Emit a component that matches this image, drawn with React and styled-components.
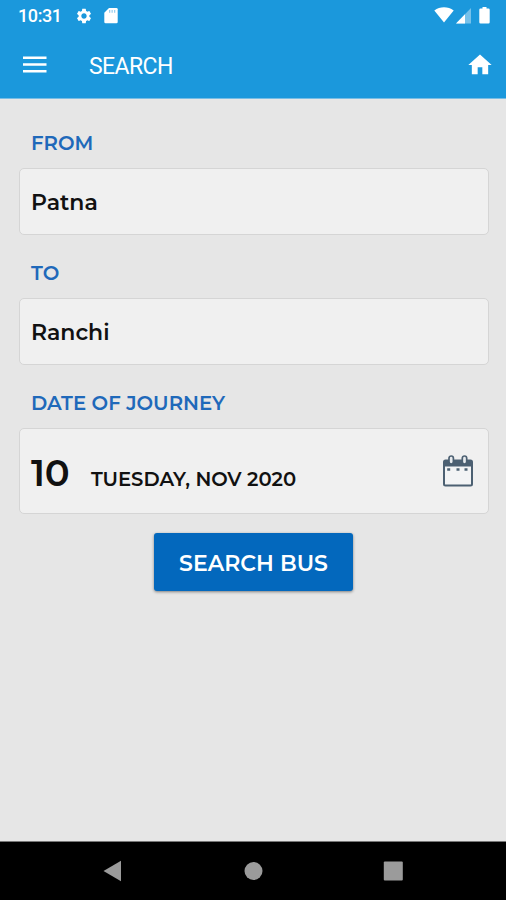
import React from "react";
import styled, { createGlobalStyle } from "styled-components";
import { MdSettings } from "react-icons/md";

const GlobalStyle = createGlobalStyle`
  * { box-sizing: border-box; }
  body { margin: 0; background: #e6e6e6; }
`;

const Screen = styled.div`
  display: flex;
  flex-direction: column;
  width: 506px;
  height: 900px;
  background: #e6e6e6;
  font-family: "Montserrat", "Inter", sans-serif;
  overflow: hidden;
`;

const Header = styled.header`
  height: 99px;
  flex: none;
  background: #1b98dc;
  border-bottom: 1px solid #78bde5;
  color: #fff;
  font-family: "Roboto", sans-serif;
`;

const StatusBar = styled.div`
  display: flex;
  align-items: center;
  height: 32px;
  padding: 0 16px 0 18px;
`;

const Clock = styled.span`
  width: 57px;
  font-size: 18px;
  font-weight: 500;
  line-height: 32px;
  letter-spacing: -0.4px;
`;

const StatusIcons = styled.div`
  display: flex;
  align-items: center;
  gap: ${(p) => p.$gap}px;
  margin-left: ${(p) => (p.$end ? "auto" : "0")};
`;

const BatterySlot = styled.span`
  display: flex;
  margin-left: 6px;
`;

const Toolbar = styled.div`
  display: flex;
  align-items: center;
  height: 66px;
  padding: 0 12px 0 23px;
`;

const IconButton = styled.button`
  display: flex;
  padding: 0;
  border: 0;
  background: none;
  color: inherit;
`;

const Title = styled.h1`
  flex: 1;
  margin: 3px 0 0 42px;
  font-size: 23px;
  font-weight: 400;
  line-height: 66px;
  letter-spacing: -0.6px;
`;

const Form = styled.main`
  flex: 1;
  display: flex;
  flex-direction: column;
  padding: 30px 17px 0 19px;
`;

const Label = styled.label`
  height: 39px;
  padding-left: 12px;
  color: #1f69ba;
  font-size: 19.7px;
  font-weight: 600;
  line-height: 29px;
`;

const Field = styled.div`
  display: flex;
  align-items: center;
  height: ${(p) => (p.$tall ? 86 : 67)}px;
  margin-bottom: ${(p) => (p.$tall ? 19 : 24)}px;
  padding: ${(p) => (p.$tall ? "0 15px 2px 11px" : "2px 15px 0 11px")};
  border: 1px solid #d5d5d5;
  border-radius: 5px;
  background: #f0f0f0;
  color: #111;
`;

const Value = styled.span`
  font-size: 22px;
  font-weight: 600;
`;

const DateText = styled.div`
  flex: 1;
  display: flex;
  align-items: baseline;
  padding-top: 4px;
`;

const Day = styled.span`
  width: 60px;
  font-size: 37px;
  font-weight: 600;
  letter-spacing: -0.3px;
`;

const Month = styled.span`
  font-size: 19.6px;
  font-weight: 600;
  white-space: nowrap;
`;

const SearchButton = styled.button`
  align-self: center;
  width: 199px;
  height: 58px;
  margin-right: 2px;
  padding: 3px 0 0 1px;
  border: 0;
  border-radius: 3px;
  background: #0368bd;
  box-shadow: 0 1px 3px rgba(0, 0, 0, 0.45);
  color: #fff;
  font-family: inherit;
  font-size: 22px;
  font-weight: 600;
  white-space: nowrap;
`;

const NavBar = styled.nav`
  flex: none;
  display: flex;
  justify-content: space-between;
  align-items: center;
  height: 59px;
  padding: 0 103px 0 102px;
  border-top: 1px solid #777;
  background: #000;
`;

const SdCard = () => (
  <svg width="14" height="17" viewBox="0 0 14 17">
    <path fill="#fff" d="M5 0h7.400a1.300 1.300 0 0 1 1.300 1.300v12.700a1.300 1.300 0 0 1-1.300 1.300H1.600A1.300 1.300 0 0 1 .3 14V4.700z" />
    <path fill="#9bd0f0" d="M5 2h1.300v2.700H5zM7.500 2h1.300v2.700H7.500zM10 2h1.300v2.700H10z" />
  </svg>
);

const Wifi = () => (
  <svg width="20" height="18" viewBox="0 0 20 18">
    <path fill="#fff" d="M.3 3.500C6-.8 14-.8 19.700 3.500L10 15.500z" />
  </svg>
);

const Signal = () => (
  <svg width="15" height="16" viewBox="0 0 15 16">
    <path fill="#76c1ea" d="M15 0v15.500H0z" />
    <path fill="#fff" d="M9 6.200v9.300H0z" />
  </svg>
);

const Battery = () => (
  <svg width="11" height="18" viewBox="0 0 11 18">
    <path fill="#fff" d="M3.500 0h4v1.500h2A1.200 1.200 0 0 1 10.700 2.700v12.500a1.200 1.200 0 0 1-1.200 1.200h-8A1.200 1.200 0 0 1 .3 15.200V2.700A1.200 1.200 0 0 1 1.500 1.500h2z" />
  </svg>
);

const Menu = () => (
  <svg width="24" height="18" viewBox="0 0 24 18">
    <path fill="#fff" d="M0 .5h23.500v2.600H0zM0 7.200h23.500v2.600H0zM0 13.900h23.500v2.600H0z" />
  </svg>
);

const Home = () => (
  <svg width="28" height="28" viewBox="0 0 24 24">
    <path fill="#fff" d="M10 20v-6h4v6h5v-8h3L12 3 2 12h3v8z" />
  </svg>
);

const Calendar = () => (
  <svg width="30" height="33" viewBox="0 0 30 33">
    <rect x="1" y="6.500" width="28" height="25" rx="1.500" fill="#f3f4f5" stroke="#4c6072" strokeWidth="2" />
    <path fill="#4c6072" d="M1 6h28v6.500H1z" />
    <g fill="#e8ebee" stroke="#4c6072" strokeWidth="1.700">
      <rect x="6" y="2" width="4.400" height="8" rx="2.200" />
      <rect x="19.300" y="2" width="4.400" height="8" rx="2.200" />
    </g>
    <path fill="#4c6072" d="M4.200 14.200h3v2.600h-3zM13.500 14.200h3v2.600h-3zM21.500 14.200h3v2.600h-3z" />
  </svg>
);

const Back = () => (
  <svg width="20" height="22" viewBox="0 0 20 22">
    <path fill="#9b9b9b" d="M19 .8v20.400L1.500 11z" />
  </svg>
);

const Circle = () => (
  <svg width="20" height="20" viewBox="0 0 20 20">
    <circle cx="10.500" cy="10" r="9" fill="#9b9b9b" />
  </svg>
);

const Square = () => (
  <svg width="20" height="20" viewBox="0 0 20 20">
    <rect x=".8" y=".5" width="19" height="19" rx="1" fill="#9b9b9b" />
  </svg>
);

export default function App() {
  return (
    <Screen>
      <GlobalStyle />
      <Header>
        <StatusBar>
          <Clock>10:31</Clock>
          <StatusIcons $gap={11}>
            <MdSettings size={18} />
            <SdCard />
          </StatusIcons>
          <StatusIcons $gap={2} $end>
            <Wifi />
            <Signal />
            <BatterySlot><Battery /></BatterySlot>
          </StatusIcons>
        </StatusBar>
        <Toolbar>
          <IconButton aria-label="Menu"><Menu /></IconButton>
          <Title>SEARCH</Title>
          <IconButton aria-label="Home"><Home /></IconButton>
        </Toolbar>
      </Header>
      <Form>
        <Label>FROM</Label>
        <Field><Value>Patna</Value></Field>
        <Label>TO</Label>
        <Field><Value>Ranchi</Value></Field>
        <Label>DATE OF JOURNEY</Label>
        <Field $tall>
          <DateText>
            <Day>10</Day>
            <Month>TUESDAY, NOV 2020</Month>
          </DateText>
          <Calendar />
        </Field>
        <SearchButton>SEARCH BUS</SearchButton>
      </Form>
      <NavBar>
        <Back />
        <Circle />
        <Square />
      </NavBar>
    </Screen>
  );
}
